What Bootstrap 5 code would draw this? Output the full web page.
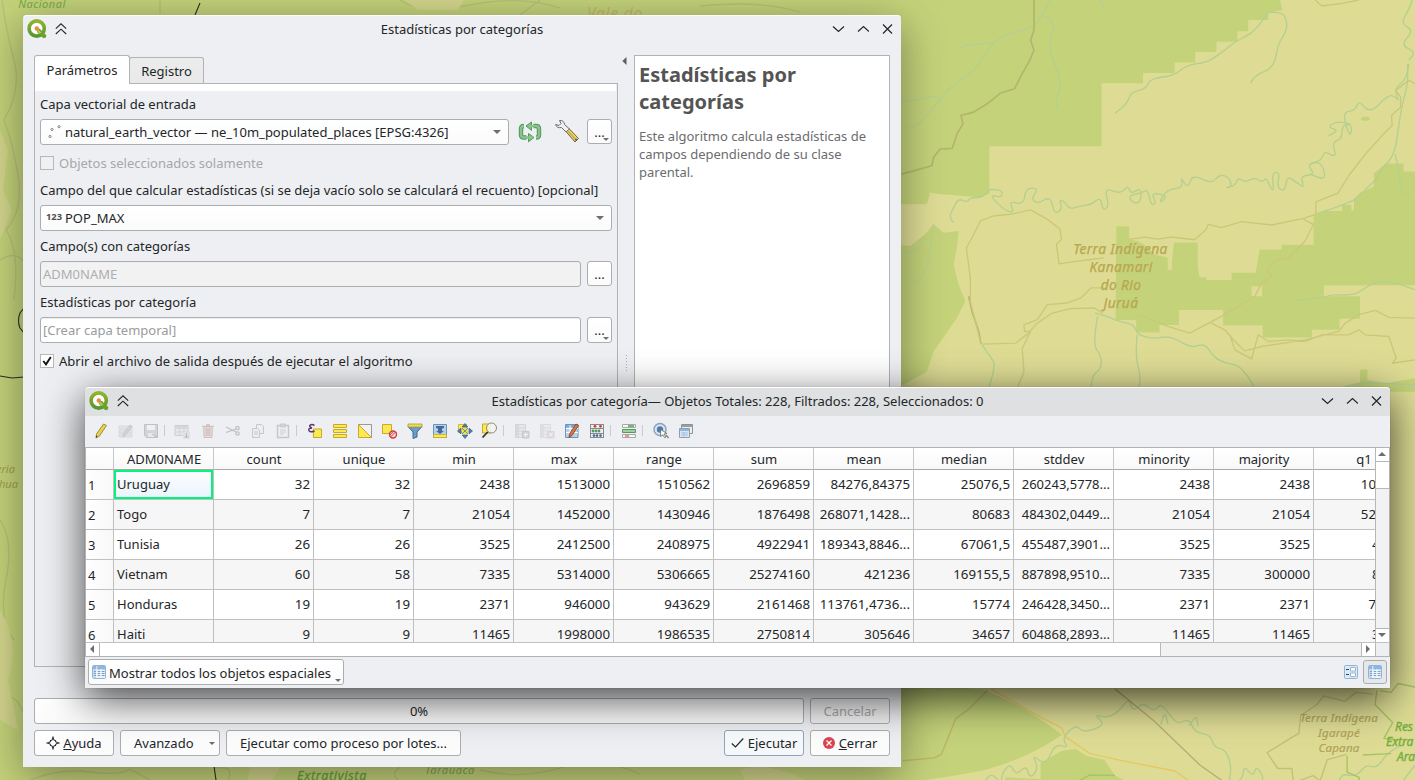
<!DOCTYPE html>
<html lang="es">
<head>
<meta charset="utf-8">
<title>Estadísticas por categorías</title>
<link href="https://cdn.jsdelivr.net/npm/bootstrap@5.3.0/dist/css/bootstrap.min.css" rel="stylesheet">
<style>
  body{width:1415px;height:780px;overflow:hidden;background:#dedc94;font-family:"Noto Sans",sans-serif;font-size:13px;line-height:18px;color:#232629}
  .desk{width:1415px;height:780px}
  .desk svg{display:block;flex:none}
  .map{left:0;top:0}
  .win{position:absolute;background:#eeeff2;border-radius:4px 4px 0 0}
  .dlg{left:23px;top:15px;width:878px;height:752px;box-shadow:0 10px 44px rgba(0,0,0,.4)}
  .attr{left:85px;top:387px;width:1305px;height:301px;box-shadow:0 11px 42px rgba(0,0,0,.72),0 0 1px rgba(0,0,0,.4)}
  .tbar{height:28px;border-top:1px solid #fff;border-radius:4px 4px 0 0;padding:0 8px 2px 4px}
  .attr .tbar{height:29px;background:#dee0e2}
  .wbtns{gap:12px}
  .ttl{left:0;right:0;text-align:center}
  .tabx{border:1px solid #b1b3b5;border-bottom:0;border-radius:3px 3px 0 0;background:linear-gradient(#ececed,#e9e9ea);height:26px;width:75px;padding-top:4px;text-align:center;margin-left:-1px;margin-bottom:1px}
  .tabx.on{background:#fff;height:29px;width:96px;position:relative;z-index:1;margin:0;padding-top:5px}
  .pane{border:1px solid #b1b3b5;margin-top:-1px;height:584px;background:#eeeff2;width:584px;padding:0 5px}
  .pane:before{content:"";display:block;height:7px;background:#fff;margin:0 -4px 0 -5px}
  .bx{border:1px solid #abadaf;border-radius:3px;background:linear-gradient(#fff,#fbfbfb);height:26px;display:flex;align-items:center;white-space:nowrap}
  .inp{background:#fff;color:#999b9d;padding-left:2px;width:541px;box-shadow:inset 0 1px 0 #eee}
  .inp.dis{background:#f2f2f2;color:#acaeb0}
  .lb{height:18px;white-space:nowrap}
  .dots{width:25px;height:25px;position:relative;justify-content:center}
  .arr{width:0;height:0;border:4px solid transparent;border-top:4px solid #6c6e70;border-bottom:0}
  .arr.sm{border-width:3px 3px 0;position:absolute;right:2px;bottom:2px}
  .chk{width:14px;height:14px;border:1px solid #b6b8ba;background:#f0f0f1;margin-right:5px}
  .help{width:256px;height:612px;border:1px solid #b1b3b5;background:#fff;padding:5px 4px;color:#6b6c6e}
  .help h1{font-size:20px;font-weight:700;line-height:27px;color:#545454;margin:0 0 12px}
  .help p{margin:0}
  .split{width:16px}
  .tool{height:31px;padding:0 0 2px 3px}
  .tool .ic{width:25px;display:flex;justify-content:center}
  .tool .sp{width:7px;height:11px}
  .tool .sp:before{content:"";display:block;margin-left:1px;width:1px;height:11px;background:#c9cbcd}
  .off{opacity:.38}
  .view{height:210px;border:1px solid #b1b3b5;background:#fff}
  .clip{width:1289px;height:194px;overflow:hidden}
  .grid{table-layout:fixed;width:1328px;border-collapse:separate;border-spacing:0}
  .grid th,.grid td{padding:0 3px 2px 0;height:30px;border-right:1px solid #c0c0c0;border-bottom:1px solid #c0c0c0;text-align:right;overflow:hidden;white-space:nowrap;vertical-align:middle;font-weight:400}
  .grid td{font-size:13.3px}
  .grid td:nth-child(11){font-size:13px}
  .grid thead th{height:22px;text-align:center;background:linear-gradient(#fff,#f8f8f8);border-bottom-color:#a6a8aa;border-right-color:#c8c8c8;padding:0 0 0 1px}
  .grid tbody th{text-align:left;padding:0 0 0 2px;background:linear-gradient(90deg,#fff,#f8f8f8)}
  .grid tbody td:nth-child(2){text-align:left;padding-left:3px;font-size:13px}
  .grid tbody tr:nth-child(even) td{background:#f6f6f6}
  .grid tbody tr:first-child td:nth-child(2){background:linear-gradient(#fbfdff,#eaf4fc);box-shadow:inset 0 0 0 2px #00f57a}
  .vs{width:14px;height:194px;border-left:1px solid #b5b7b9;background:#f2f2f2}
  .vs div,.hs div{display:flex;align-items:center;justify-content:center;background:#fff}
  .vs svg{margin:-1px 0 0 -1px}
  .hs{height:14px;border-top:1px solid #c0c0c0;background:#f2f2f2}
  .hs svg{margin:-1px 0 0 -2px}
  .pb{height:26px}
  .btnx{padding:0 10px;justify-content:center}
  .lrow{gap:6px}
</style>
</head>
<body>
<div class="desk position-relative overflow-hidden">
<svg class="map position-absolute" width="1415" height="780" viewBox="0 0 1415 780">
  <rect width="1415" height="780" fill="#dedc94"/>
  <path fill="#c4d37a" d="M0 0H900V780H0z"/>
  <g fill="none" stroke="#b9bf78" stroke-width="1.3">
    <path d="M2 0Q6 30 14 60T4 120Q12 140 18 175T6 230Q20 250 14 300M0 260Q16 250 24 262M0 520Q14 540 6 580T14 640M0 700Q14 690 23 712"/>
    <path d="M30 780Q60 768 90 772T130 769L150 780M215 768Q235 765 228 780M400 767Q390 774 398 780M480 770Q520 780 560 768T640 774"/>
    <path d="M400 0Q420 15 470 5T560 8M540 0L520 15M700 6Q760 0 800 12M160 0V14"/>
  </g>
  <path fill="#d3d58c" d="M0 130L8 150L3 190L12 210L0 240zM0 610Q20 640 8 680L18 730L0 720zM250 767h30l-8 13h-24zM404 0h60l-6 10h-40zM740 770l20-5 30 8 15 7h-60z"/>
  <path fill="none" stroke="#2c2f20" stroke-width="1.1" d="M0 376L12 378L24 377M24 308L20 313Q17 321 20 328L24 333M214 766L216 780M200 3L195 15"/>
  <g transform="translate(890 0) scale(.3348)">
    <path fill="#c4d37a" d="M0 0H1165L1172 30L1130 38V60H1070V93H1038V125H975V155H912V187H850V218H756V249H632V437H297V578L270 590L215 585L150 580L120 575L110 610H0zM0 730L60 735L105 700L130 670L160 695L205 690L200 740L190 790L205 850L225 900L200 950L165 1000L130 1050L110 1110L0 1170z"/>
    <path fill="#c4d37a" d="M676 676H714V715L740 720L765 735L790 760L830 770V805H840L848 724H919V800L925 828H945V836H1020V815H1092L1104 745H1170V731H1265V645L1300 630H1350V612H1378V628H1386V595L1405 575L1445 558V518L1480 488H1534V512H1568V852H1420V853H1296V885H1404V952H1343V985H1260V1008H1113V972H995V926H863V971H805V993H735V956H674zM1404 1104H1426V1135L1480 1145L1568 1130V1170H1350L1404 1140z"/>
    <path fill="#dedc94" d="M1080 855h31v30h-31zM830 765l12-25v65h-12z"/>
    <ellipse cx="1420" cy="355" rx="13" ry="6" fill="#c4d37a"/>
    <g class="flow" fill="none" stroke="#b5cf90" stroke-width="4" stroke-linejoin="round">
      <path d="M480 0L452 45L440 70L400 92L350 100L310 130L250 130L208 143M310 130L275 170L258 205L215 235L165 275L150 300L120 330L90 370L50 385M35 303L90 298L130 284L150 300M455 45L485 55L488 90L474 130L485 180L503 215L510 265L495 290L500 325M628 0L640 28"/>
      <path d="M1130 38L1172 33L1188 70L1180 100L1160 130L1150 185L1130 210L1105 218L1085 235L1077 248M1130 38L1110 65L1090 90L1065 108L1030 125L1000 150L965 175L940 187L885 195L850 225L800 232L775 240L765 265L720 275L708 310L672 338"/>
      <path d="M190 665L175 650L190 620L205 592L230 605L240 590L275 590L290 572L300 565L335 568L335 590L295 582L345 630L372 635L355 600L400 612L405 562L445 562L422 592L440 610L480 585L490 640L515 625L505 595L525 605L535 625L570 615L600 612L630 588L635 630L655 615L640 560L690 580L710 553L720 580L750 560L750 600L730 610L710 585L755 575L770 565L780 615L795 605L780 575L832 585L800 610L828 565L875 562L868 525L888 565L905 520L960 550L985 520L1015 530L1020 560L1000 560L1030 555L1040 530L1060 545L1090 530L1110 545L1125 530L1130 550L1148 575L1140 515L1165 515L1155 560L1180 572L1185 525L1215 545L1238 562L1225 525L1270 522L1245 490L1290 480L1295 450L1335 472L1320 425L1350 415L1350 375L1380 370L1375 415L1350 335L1390 330L1400 300L1425 330L1450 325L1470 300L1500 280L1522 305L1505 265L1540 240L1550 190"/>
      <path d="M1560 0L1550 30L1525 70L1565 90L1525 135L1570 155L1550 180M1545 190L1550 240L1530 310L1520 370L1508 460L1470 505L1450 540L1430 555L1400 590L1370 605L1330 620L1270 640M1508 460L1520 500L1525 560L1532 585M1310 405L1345 390L1305 380L1335 362L1375 370M1255 490L1285 475L1305 540L1255 520"/>
      <path d="M612 935L640 942L660 950L690 962L730 970L738 1000L790 1012L820 1005L850 1010L900 1040L940 1025L965 1065L1000 1085L1040 1090L1070 1125L1090 1160M620 945L605 1030L630 1060L632 1100L605 1120L600 1160M738 1000L732 1060L750 1130L740 1165M275 1030L300 1065L315 1090L295 1160M1210 898L1290 890L1320 880L1390 882L1430 850L1480 835L1568 865M1350 1160L1390 1140L1568 1150"/>
      <path d="M130 670L120 760L100 830L50 855M40 760L90 745L105 705" opacity=".7"/>
    </g>
    <g fill="none" stroke="#b3b56d" stroke-width="5" stroke-linejoin="round">
      <path d="M430 0V90L420 120L430 150L415 185L395 220L372 265L330 278L290 310L250 335L212 345L218 370L200 400L186 443L150 445L130 470L125 495L35 520"/>
      <path d="M235 885L245 930L265 990L272 1028"/>
    </g>
    <g fill="none" stroke="#cbc779" stroke-width="4" stroke-linejoin="round">
      <path d="M275 1028L375 1025L410 998L440 965L485 935L540 922L610 920L635 935M272 1028L240 900L240 830L228 740L245 710L270 660L310 645L360 640L420 627L470 655L508 685L512 715L497 730L505 788L560 780L600 775L640 770M640 860L600 860L570 890L530 905L470 910L440 955L400 970L402 990L420 990L395 1040L400 1110L380 1160"/>
      <path d="M714 715L760 708L800 714L840 708L910 716L945 685L950 670L990 680L1050 662L1140 672L1235 652L1272 640V603L1338 577L1370 525L1420 460L1470 405L1500 375L1498 345L1525 320V290L1510 270L1550 240L1568 250M1235 655L1265 670L1240 720L1190 770L1150 780L1125 805L1140 825L1110 845L1090 885L990 945L895 995L830 975L740 940M960 965L1000 985L1030 1020L1060 1048L1110 1035L1240 1015L1340 990L1360 965L1400 940L1450 927L1490 948L1568 950M1015 1000L1030 1045L1080 1072L1100 1000L1130 1020L1190 1015L1240 1020L1290 1000L1370 1000L1400 985L1420 1000L1490 1005L1512 1070L1500 1085L1568 1075M1270 0L1290 18L1350 10L1400 0"/>
    </g>
  </g>
  <g transform="translate(860 680) scale(.354)">
    <path fill="#dedc94" d="M100 0H1568V300H0L300 265L460 215L570 155L350 30z"/>
    <path fill="#c4d37a" d="M100 0L350 28Q480 80 570 155Q480 220 350 255Q200 285 60 295L0 300V0z"/>
    <path fill="#c4d37a" d="M410 275L510 280V235L570 200L610 195L640 215L690 225L720 270L780 300H410z"/>
    <g fill="none" stroke-width="4" stroke-linejoin="round">
      <g class="flow"><path stroke="#b5cf90" d="M320 300L330 275L345 300L370 260L400 295L400 265L425 235L440 270L470 240L480 280L505 250L485 210L525 242L550 180L590 192L570 165L610 125L630 150L695 127L660 97L700 107L730 90L760 50L770 90L800 62L830 90L850 65L880 105L900 125L930 108L945 148L990 155L1000 190L1035 198L1050 250L1040 290L1080 285L1085 240L1110 275L1120 240L1145 285L1110 300M850 125L860 85L870 125M930 130L950 95L955 130M1350 300L1355 262L1400 275L1430 238L1460 250L1490 205L1540 180M1530 290L1568 240"/></g>
      <path stroke="#b9ae78" d="M720 25L830 115L960 240L1045 300"/>
      <path stroke="#e4c866" d="M370 25L440 65L510 105L570 135L580 160L650 208L760 232L890 257L950 300"/>
      <path stroke="#bbb66e" d="M120 228L210 220L230 210L270 110L310 80L360 30"/>
      <path stroke="#c6c077" d="M1225 295L1220 250L1180 250L1150 205L1240 150L1245 100L1290 70L1310 45L1370 60L1400 35L1450 40M1225 290L1280 270L1300 285L1320 225L1375 210"/>
      <path stroke="#a5c463" d="M1460 30L1455 70L1505 120L1480 165L1520 170M1376 215V260L1410 275V300M1470 30L1500 35L1520 10L1568 20M1420 212L1500 208M590 300L650 268L720 270"/>
    </g>
  </g>
  <g font-family="'Noto Sans',sans-serif" font-style="italic" text-anchor="middle">
    <g font-size="13.8" fill="#b9a650" letter-spacing=".35" stroke="#b9a650" stroke-width=".25">
      <text x="1120.500" y="254">Terra Indígena</text><text x="1121" y="272">Kanamari</text><text x="1121" y="290">do Rio</text><text x="1121" y="308">Juruá</text>
    </g>
    <g font-size="11.600" fill="#b0a258" letter-spacing=".2" stroke="#b0a258" stroke-width=".2"><text x="1339" y="722">Terra Indígena</text><text x="1339" y="737">Igarapé</text><text x="1339" y="752">Capana</text></g>
    <g font-size="12" fill="#74ae3c" text-anchor="start" stroke="#74ae3c" stroke-width=".35"><text x="1395" y="731">Res</text><text x="1386" y="746">Extra</text><text x="1397" y="761">Ara</text></g>
    <text x="332" y="780" font-size="12.5" letter-spacing=".7" fill="#65a33a" stroke="#65a33a" stroke-width=".3">Extrativista</text>
    <text x="450" y="774" font-size="11" letter-spacing=".6" fill="#7ea352">Tarauacá</text>
    <text x="42" y="8" font-size="11" letter-spacing=".5" fill="#78a848">Nacional</text>
    <text x="615" y="19" font-size="15.500" letter-spacing=".8" fill="#c3b765">Vale do</text>
    <g text-anchor="start" font-size="11" fill="#9f9c50"><text x="-4" y="473">eria</text><text x="-1" y="488">hua</text></g>
  </g>
</svg>

<svg width="0" height="0" class="position-absolute">
  <defs>
    <linearGradient id="qg" x2="0" y2="1"><stop stop-color="#8fb52b"/><stop offset="1" stop-color="#589632"/></linearGradient>
    <g id="qgis"><circle cx="9.700" cy="9.500" r="7.600" fill="#fff" stroke="url(#qg)" stroke-width="3.600"/><path d="M9 9l4 1 6.300 6.200-.4 2.300-2.600.8L10 13z" fill="#6aa12e"/><path d="M10.500 9.800l3.800 3.600-1.600 1.400-3.200-3.600z" fill="#b9cf4a"/><circle cx="9.800" cy="9.400" r="2.200" fill="#f0854a"/></g>
    <g id="up2" fill="none" stroke="#232629" stroke-width="1.1"><path d="M.8 5.600L6 .8l5.200 4.800M.8 11L6 6.200l5.200 4.800"/></g>
    <g id="wmin" fill="none" stroke="#232629" stroke-width="1.2"><path d="M1 3.500l5.500 5 5.500-5"/></g>
    <g id="wmax" fill="none" stroke="#232629" stroke-width="1.2"><path d="M1 8.500l5.500-5 5.500 5"/></g>
    <g id="wcls" fill="none" stroke="#232629" stroke-width="1.2"><path d="M2 1.500l9 9M11 1.500l-9 9"/></g>
    <g id="tbl"><rect x=".5" y=".5" width="13" height="13" rx="1" fill="#e8f1fa" stroke="#8fb4d8"/><path d="M1 1h12v3.500H1z" fill="#8cb7e0"/><path d="M1 4.500h3.500V13H1z" fill="#c4dbf0"/><path d="M5.500 6.500h3M9.500 6.500h3M5.500 8.500h3M9.500 8.500h3M5.500 10.500h3M9.500 10.500h3M2 6.500h2M2 8.500h2M2 10.500h2" stroke="#7f9fc0"/><path d="M4.800 1v12M9 4v9" stroke="#fff" stroke-width=".8"/></g>
  </defs>
</svg>

<!-- processing dialog -->
<section class="win dlg">
  <div class="tbar d-flex align-items-center position-relative">
    <svg width="20" height="20"><use href="#qgis"/></svg>
    <svg width="12" height="12" class="ms-2"><use href="#up2"/></svg>
    <div class="ttl position-absolute">Estadísticas por categorías</div>
    <div class="wbtns d-flex ms-auto"><svg width="13" height="12"><use href="#wmin"/></svg><svg width="12" height="12"><use href="#wmax"/></svg><svg width="12" height="12"><use href="#wcls"/></svg></div>
  </div>
  <div class="d-flex" style="padding:12px 11px 0">
    <div>
      <div class="d-flex align-items-end"><div class="tabx on">Parámetros</div><div class="tabx">Registro</div></div>
      <div class="pane">
        <div class="lb" style="margin-top:4px">Capa vectorial de entrada</div>
        <div class="d-flex align-items-start" style="margin-top:6px">
          <div class="bx" style="width:469px;padding:0 7px 0 6px">
            <svg width="14" height="14" fill="#fff" stroke="#77797b" stroke-width=".9"><circle cx="3" cy="11.500" r="1.100"/><circle cx="5" cy="4.500" r="1.100"/><circle cx="12" cy="1.700" r="1.100"/></svg>
            <span style="margin-left:4px">natural_earth_vector — ne_10m_populated_places [EPSG:4326]</span><span class="arr ms-auto"></span>
          </div>
          <svg width="24" height="22" viewBox="0 0 24 22" style="margin:2px 0 0 9px"><g fill="none" stroke-linejoin="round"><path d="M8.500 16.500H6Q3 16.500 3 14V8Q3 5 6 5" stroke="#4e9a5a" stroke-width="4.400"/><path d="M15.500 5h2.500Q21 5 21 8v6q0 2.500-3 2.500" stroke="#4e9a5a" stroke-width="4.400"/><path d="M13.500 1v8.300L8 5zM10.500 12.500v8.300L16 16.500z" fill="#8cc08f" stroke="#4e9a5a"/><path d="M12 16.500H15M8.500 16.500H6Q3 16.500 3 14V8Q3 5 6 5M12 5h6Q21 5 21 8v6q0 2.500-3 2.500M8.500 16.500H12" stroke="#8cc08f" stroke-width="2.400"/></g></svg>
          <svg width="26" height="25" viewBox="0 0 26 25" style="margin:0 0 0 12px"><path d="M12 12.500l3-3 9.500 10-3.500 3.500z" fill="#ecd36a" stroke="#6a6548"/><path d="M14.500 12.500l7.500 8.500" stroke="#c9a93c" stroke-width="1.200"/><path d="M5.500 1.500Q10 1 10.500 5.500L15.500 10 12 13 7.500 8.500Q3 9.500 1.500 5.500L5 6.500 7 4.500z" fill="#f0f0f0" stroke="#6c6c6c"/><circle cx="22" cy="20.500" r=".9" fill="#555"/></svg>
          <div class="bx dots" style="margin-left:7px">...<i class="arr sm"></i></div>
        </div>
        <div class="d-flex align-items-center" style="margin-top:9px;color:#a5a7a9"><span class="chk"></span>Objetos seleccionados solamente</div>
        <div class="lb" style="margin-top:9px">Campo del que calcular estadísticas (si se deja vacío solo se calculará el recuento) [opcional]</div>
        <div class="bx" style="margin-top:6px;width:572px;padding:0 7px 0 5px"><b style="font-size:9.300px;color:#4c4c4c;width:19px;line-height:12px;margin-top:-2px">123</b>POP_MAX<span class="arr ms-auto"></span></div>
        <div class="lb" style="margin-top:6px">Campo(s) con categorías</div>
        <div class="d-flex lrow" style="margin-top:6px"><div class="bx inp dis">ADM0NAME</div><div class="bx dots">...</div></div>
        <div class="lb" style="margin-top:6px">Estadísticas por categoría</div>
        <div class="d-flex lrow" style="margin-top:6px"><div class="bx inp">[Crear capa temporal]</div><div class="bx dots" style="height:26px">...<i class="arr sm"></i></div></div>
        <div class="d-flex align-items-center" style="margin-top:9px"><span class="chk bg-white d-flex align-items-center justify-content-center"><svg width="10" height="10" fill="none" stroke="#111" stroke-width="1.900"><path d="M1.300 5L4 8.300 8.800 1"/></svg></span>Abrir el archivo de salida después de ejecutar el algoritmo</div>
      </div>
    </div>
    <div class="split"><svg width="5" height="8" style="margin:2px 0 0 4px"><path d="M4.500 0v8L.3 4z" fill="#5c5e60"/></svg>
      <svg width="2" height="18" style="margin:290px 0 0 8px"><path d="M.5 0v18" stroke="#aaa" stroke-dasharray="1 2"/></svg></div>
    <div class="help"><h1>Estadísticas por categorías</h1><p>Este algoritmo calcula estadísticas de campos dependiendo de su clase parental.</p></div>
  </div>
  <div class="d-flex lrow" style="padding:31px 11px 0">
    <div class="bx pb justify-content-center" style="width:770px">0%</div><div class="bx btnx" style="width:80px;background:#f1f1f2;color:#a5a7a9">Cancelar</div>
  </div>
  <div class="d-flex lrow" style="padding:6px 11px 0">
    <div class="bx btnx" style="width:80px"><svg width="14" height="14" fill="none" stroke="#232629" stroke-width="1.100" style="margin-right:3px"><path d="M7 .8Q7.500 4.800 9.500 4.500 9.200 6.500 13.300 7 9.200 7.500 9.500 9.500 7.500 9.200 7 13.300 6.500 9.200 4.500 9.500 4.800 7.500 .8 7 4.800 6.500 4.500 4.500 6.500 4.800 7 .8z" stroke-linejoin="round"/></svg><span><u>A</u>yuda</span></div>
    <div class="bx btnx" style="width:100px;justify-content:flex-start;padding:0 4px 0 13px">Avanzado<i class="arr ms-auto" style="border-width:3px 3px 0"></i></div>
    <div class="bx btnx" style="width:235px">Ejecutar como proceso por lotes...</div>
    <div class="bx btnx ms-auto" style="width:80px;border-color:#8ea6b8;background:linear-gradient(#fbfdfe,#f3f7fa)"><svg width="13" height="12" fill="none" stroke="#232629" stroke-width="1.200" style="margin-right:4px"><path d="M.8 6.500L4.500 10 12.300 1.500"/></svg>Ejecutar</div>
    <div class="bx btnx" style="width:80px"><svg width="12" height="12" style="margin-right:4px"><circle cx="6" cy="6" r="6" fill="#da4453"/><path d="M3.500 3.500l5 5M8.500 3.500l-5 5" stroke="#fff" stroke-width="1.200"/></svg><span><u>C</u>errar</span></div>
  </div>
</section>

<!-- attribute table -->
<section class="win attr">
  <div class="tbar d-flex align-items-center position-relative">
    <svg width="20" height="20"><use href="#qgis"/></svg>
    <svg width="12" height="12" class="ms-2"><use href="#up2"/></svg>
    <div class="ttl position-absolute">Estadísticas por categoría— Objetos Totales: 228, Filtrados: 228, Seleccionados: 0</div>
    <div class="wbtns d-flex ms-auto"><svg width="13" height="12"><use href="#wmin"/></svg><svg width="12" height="12"><use href="#wmax"/></svg><svg width="12" height="12"><use href="#wcls"/></svg></div>
  </div>
  <div class="tool d-flex align-items-center">
    <div class="ic"><svg width="16" height="16"><path d="M10.500 1l3 1.500-7 10.500-3.500 2 .5-4z" fill="#e9d24a" stroke="#8a7a35" stroke-width=".8"/><path d="M3.200 12.500l1.500 1-1.900 1.300z" fill="#333"/></svg></div>
    <div class="ic off"><svg width="16" height="16"><path d="M1 3h13v3H1zM1 7h13v3H1zM1 11h13v3H1z" fill="#d5d0c8" stroke="#aaa" stroke-width=".7"/><path d="M12 2l2 1.500-7 9-2 1 .5-3z" fill="#aaa" stroke="#777" stroke-width=".8"/></svg></div>
    <div class="ic off"><svg width="16" height="16"><path d="M1.500 1.500h13v13h-11l-2-2z" fill="#aaa" stroke="#777"/><path d="M4 2h8v5H4z" fill="#f3f3f3"/><path d="M5 10h6v4H5z" fill="#ddd"/><path d="M9 11l5 3" stroke="#666"/></svg></div>
    <div class="sp"></div>
    <div class="ic off"><svg width="17" height="16"><path d="M1 2.500h13v10H1z" fill="#ddd" stroke="#999"/><path d="M1 3h13v3H1z" fill="#b5b5b5"/><path d="M1 9h13M5.500 3v9M10 3v9" stroke="#aaa"/><path d="M9 9h7v7H9z" fill="#ccc"/><path d="M12.500 10v5M10.500 13l2 2 2-2" stroke="#666" fill="none"/></svg></div>
    <div class="ic off"><svg width="14" height="16"><path d="M2.500 5h9l-.5 9.500H3z" fill="#d8b9b9" stroke="#a77"/><path d="M1 3.500h12M5 2h4M5.200 6v7M7 6v7M8.800 6v7" stroke="#a77" stroke-width="1.300"/></svg></div>
    <div class="ic off"><svg width="16" height="16" fill="none" stroke="#777" stroke-width="1.300"><path d="M1 4l10 5M1 9.500L11 6"/><circle cx="12.500" cy="5" r="1.700"/><circle cx="12.500" cy="10.500" r="1.700"/></svg></div>
    <div class="ic off"><svg width="14" height="16" fill="#eee" stroke="#888"><path d="M5.500 1.500h5l2 2v7h-7z"/><path d="M1.500 5.500h5l2 2v7h-7z"/><path d="M3 9h4M3 11h4"/></svg></div>
    <div class="ic off"><svg width="14" height="16" fill="#eee" stroke="#888"><path d="M1.500 2.500h11v12h-11z" stroke-width="1.400"/><path d="M4.500 1h5v3h-5z" fill="#aaa"/><path d="M4 7h6M4 9h6M4 11h4" stroke-width=".8"/></svg></div>
    <div class="sp"></div>
    <div class="ic"><svg width="16" height="16"><path d="M6.500 6h8v8.500h-8z" fill="#fce94f" stroke="#c9a92c"/><path d="M7.500 2.500Q5 .5 3 2.200 2 4 5 5 1.500 5 1.800 7.200 3 10 7.500 8" fill="none" stroke="#5c3566" stroke-width="1.500"/></svg></div>
    <div class="ic"><svg width="16" height="16" fill="#fce94f" stroke="#c9a92c"><path d="M1.500 1.500h13v3h-13zM1.500 6.500h13v3h-13zM1.500 11.500h13v3h-13z"/></svg></div>
    <div class="ic"><svg width="16" height="16"><path d="M1.500 1.500h13v13z" fill="#f2f2f2" stroke="#999"/><path d="M1.500 1.500v13h13z" fill="#fce94f" stroke="#c9a92c"/></svg></div>
    <div class="ic"><svg width="17" height="16"><path d="M1.500 1.500h9v9h-9z" fill="#fce94f" stroke="#c9a92c"/><circle cx="12" cy="11.500" r="3.500" fill="#f7d9d9" stroke="#d23b3b" stroke-width="1.400"/><path d="M9.500 14l5-5M8.800 12l3-3" stroke="#d23b3b"/></svg></div>
    <div class="ic"><svg width="16" height="16"><path d="M1 3.500l5 5.500v6.500l4-1.500V9l5-5.500z" fill="#6d9cc9" stroke="#41699a"/><path d="M1 1h14v3H1z" fill="#f3df42" stroke="#9a9440" stroke-width=".7"/></svg></div>
    <div class="ic"><svg width="16" height="16"><path d="M1.500 1.500h13v13h-13z" fill="#b8d1ea" stroke="#6d94ba"/><path d="M1.500 11.500h13v3h-13z" fill="#fce94f" stroke="#c9a92c" stroke-width=".8"/><path d="M4 3h8v2l-2 .5V8h2l-4 3-4-3h2V5.500L4 5z" fill="#41699a"/></svg></div>
    <div class="ic"><svg width="16" height="16"><path d="M1.500 1.500h8v8h-8z" fill="#fce94f" stroke="#c9a92c" stroke-width=".8"/><path d="M8 .5l2.800 3.500H5.200zM8 15.500l2.800-3.500H5.200zM.5 8L4 5.200v5.600zM15.500 8L12 5.200v5.600z" fill="#5480ad" stroke="#345c87" stroke-width=".7"/><path d="M5 5h6v6H5z" fill="#f3df42"/><path d="M5 5l6 6M11 5l-6 6" stroke="#5480ad" stroke-width=".8"/></svg></div>
    <div class="ic"><svg width="17" height="17"><path d="M1.500 2h8v9h-8z" fill="#fce94f" stroke="#c9a92c"/><circle cx="10.500" cy="6" r="5" fill="#f3f3e8" fill-opacity=".95" stroke="#8a8a80"/><path d="M6.800 10L1.500 15.500" stroke="#333" stroke-width="1.800"/></svg></div>
    <div class="sp"></div>
    <div class="ic off"><svg width="16" height="16"><path d="M1.500 1.500h10v13h-10z" fill="#ddd" stroke="#aaa"/><path d="M2 2h3v12H2z" fill="#bbb"/><path d="M2 5h9M2 8h9M2 11h9" stroke="#aaa"/><path d="M8.500 8.500h6.500v6.500H8.500z" fill="#aaa" stroke="#888"/><path d="M10 11.700h4M11.700 10v4" stroke="#fff"/></svg></div>
    <div class="ic off"><svg width="16" height="16"><path d="M1.500 1.500h10v13h-10z" fill="#e4e4e4" stroke="#bbb"/><path d="M2 2h3v12H2z" fill="#ccb"/><path d="M2 5h9M2 8h9M2 11h9" stroke="#bbb"/><path d="M8.500 8.500h6.500v6.500H8.500z" fill="#cbb" stroke="#baa"/><path d="M10 10l3.500 3.500M13.500 10L10 13.500" stroke="#fff"/></svg></div>
    <div class="ic"><svg width="16" height="16"><path d="M1.500 1.500h12.500v13H1.500z" fill="#b8d1ea" stroke="#6d94ba"/><path d="M2 2h12v2.500H2z" fill="#7ba7d3"/><path d="M2 5.500h12M2 9.500h12M6 2v12" stroke="#fff"/><path d="M12 1l2.500 1.500-6.500 10-3 2 .5-3.500z" fill="#dc7444" stroke="#7a3d20" stroke-width=".8"/></svg></div>
    <div class="ic"><svg width="16" height="16"><path d="M1.500 1v14M14.500 1v14M1 5.500h14M1 10.500h14M1 14.500h14M1 1.500h14" stroke="#8a8a8a" fill="none"/><g fill="#d23b3b"><circle cx="6" cy="3.300" r="1.400"/><circle cx="11.500" cy="3.300" r="1.400"/></g><g fill="#4e9a5a"><circle cx="4" cy="8" r="1.400"/><circle cx="7" cy="8" r="1.400"/><circle cx="10" cy="8" r="1.400"/></g><g fill="#41699a"><circle cx="5" cy="12.600" r="1.300"/><circle cx="8" cy="12.600" r="1.300"/><circle cx="11.500" cy="12.600" r="1.300"/></g></svg></div>
    <div class="sp"></div>
    <div class="ic"><svg width="16" height="16"><path d="M1.500 1.500h13v3h-13zM1.500 11.500h13v3h-13z" fill="#f5f5f5" stroke="#a8a8a8"/><path d="M1.500 6.500h13v3h-13z" fill="#9fd09f" stroke="#559a55"/><path d="M7 3h6" stroke="#4e9a5a" stroke-width="1.500"/><path d="M4 13h4" stroke="#d23b3b"/></svg></div>
    <div class="sp"></div>
    <div class="ic"><svg width="18" height="17"><circle cx="8" cy="7.500" r="6" fill="#dce6f0" stroke="#8da0b5" stroke-width="1.400"/><circle cx="8" cy="7.500" r="3.200" fill="#4c7dae"/><path d="M8.500 7.500l6.500 4-3 .5 2 3-1.300.7-2-3-2 2z" fill="#fff" stroke="#666" stroke-width=".8"/><path d="M14 13l2.500 3" stroke="#888" stroke-width="1.500"/></svg></div>
    <div class="ic"><svg width="16" height="16"><path d="M3.500 1.500h11v9h-11z" fill="#eee" stroke="#8f9193"/><path d="M3.500 2h11v2h-11z" fill="#9a9c9e"/><path d="M1.500 5.500h10v9h-10z" fill="#d7e6f5" stroke="#8f9fb0"/><path d="M2 6h9v2H2z" fill="#8cb7e0"/><path d="M3 10h7M3 12h7M6 9v5" stroke="#a9c1da"/></svg></div>
  </div>
  <div class="view">
    <div class="d-flex">
      <div class="clip"><table class="grid"><colgroup><col style="width:28px"></colgroup><thead><tr id="head"></tr></thead><tbody id="rows"></tbody></table></div>
      <div class="vs"><div style="height:14px;border-bottom:1px solid #b5b7b9"><svg width="8" height="4"><path d="M0 4L4 0l4 4z" fill="#6c6e70"/></svg></div><div style="height:27px;border-bottom:1px solid #b5b7b9"></div><div style="height:14px;margin-top:139px;border-top:1px solid #b5b7b9"><svg width="8" height="4"><path d="M0 0L4 4l4-4z" fill="#6c6e70"/></svg></div></div>
    </div>
    <div class="hs d-flex"><div style="width:14px;border-right:1px solid #b5b7b9"><svg width="4" height="8"><path d="M4 0L0 4l4 4z" fill="#6c6e70"/></svg></div><div style="width:1061px;border-right:1px solid #b5b7b9"></div><div style="width:14px;margin-left:200px;border-left:1px solid #b5b7b9"><svg width="4" height="8"><path d="M0 0L4 4 0 8z" fill="#6c6e70"/></svg></div><div style="width:14px;border-left:1px solid #b5b7b9;background:#eeeff2"></div></div>
  </div>
  <div class="d-flex align-items-center" style="padding:2px 3px 0">
    <div class="bx position-relative" style="width:256px;padding:1px 0 0 3px"><svg width="14" height="14" style="margin:-2px 3px 0 0"><use href="#tbl"/></svg>Mostrar todos los objetos espaciales<i class="arr sm"></i></div>
    <svg width="14" height="14" class="ms-auto"><rect x=".5" y=".5" width="13" height="13" rx="1" fill="#dbe9f6" stroke="#8fb4d8"/><path d="M2 4.500h3M2 9.500h3" stroke="#444"/><path d="M6.500 2.500h5v3.500h-5zM6.500 8h5v3.500h-5z" fill="#fff" stroke="#9ab4cf"/></svg>
    <div class="bx justify-content-center" style="width:24px;height:24px;margin-left:5px;background:#e6e7e9"><svg width="14" height="14"><use href="#tbl"/></svg></div>
  </div>
</section>
</div>
<script>
  const cols = ["ADM0NAME","count","unique","min","max","range","sum","mean","median","stddev","minority","majority","q1"];
  const data = [
    ["Uruguay","32","32","2438","1513000","1510562","2696859","84276,84375","25076,5","260243,5778...","2438","2438","10350,5"],
    ["Togo","7","7","21054","1452000","1430946","1876498","268071,1428...","80683","484302,0449...","21054","21054","52304,5"],
    ["Tunisia","26","26","3525","2412500","2408975","4922941","189343,8846...","67061,5","455487,3901...","3525","3525","43525"],
    ["Vietnam","60","58","7335","5314000","5306665","25274160","421236","169155,5","887898,9510...","7335","300000","83427"],
    ["Honduras","19","19","2371","946000","943629","2161468","113761,4736...","15774","246428,3450...","2371","2371","7325,5"],
    ["Haiti","9","9","11465","1998000","1986535","2750814","305646","34657","604868,2893...","11465","11465","32645"]
  ];
  document.getElementById("head").innerHTML = "<th></th>" + cols.map(c => `<th>${c}</th>`).join("");
  document.getElementById("rows").innerHTML = data.map((r, i) => `<tr><th>${i + 1}</th>${r.map(v => `<td>${v}</td>`).join("")}</tr>`).join("");

  // rivers: round each polyline through the midpoints of its segments
  document.querySelectorAll(".flow path").forEach(p => {
    const out = p.getAttribute("d").split("M").filter(Boolean).map(s => {
      const pts = s.split("L").map(q => q.trim().split(/\s+/).map(Number));
      let d = "M" + pts[0].join(" ");
      for (let i = 1; i < pts.length - 1; i++) {
        const [x, y] = pts[i], [nx, ny] = pts[i + 1];
        d += `Q${x} ${y} ${(x + nx) / 2} ${(y + ny) / 2}`;
      }
      return d + "L" + pts[pts.length - 1].join(" ");
    });
    p.setAttribute("d", out.join(""));
  });
</script>
<script src="https://cdn.jsdelivr.net/npm/bootstrap@5.3.0/dist/js/bootstrap.bundle.min.js"></script>
</body>
</html>
